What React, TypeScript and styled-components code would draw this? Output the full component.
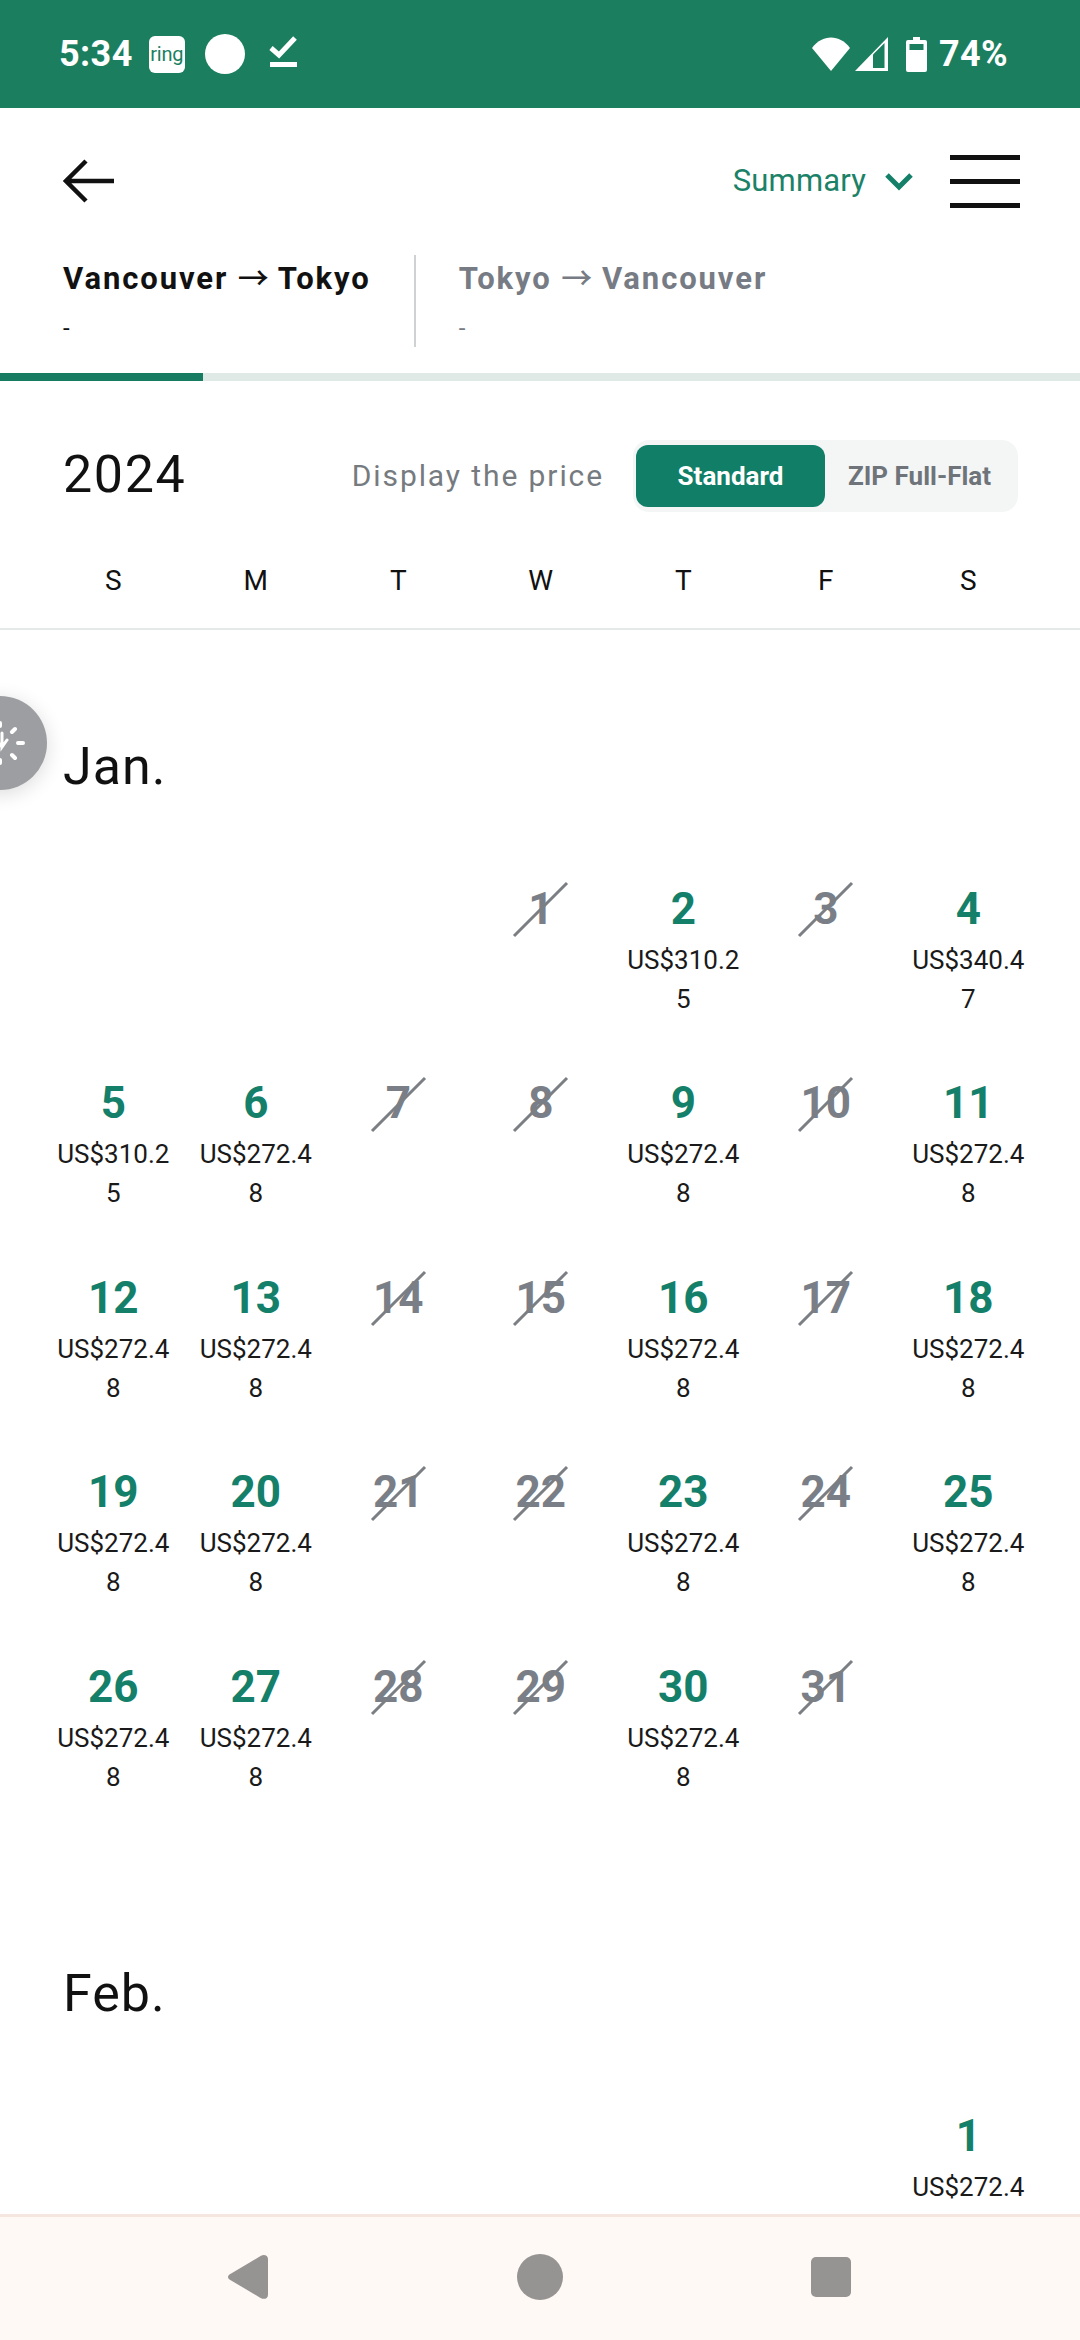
import styled, { createGlobalStyle } from "styled-components";

const GlobalStyle = createGlobalStyle`
    html, body {
        margin: 0;
        padding: 0;
        background: #fff;
    }
    * {
        box-sizing: border-box;
    }
`;

const Page = styled.div`
    width: 1080px;
    height: 2340px;
    display: flex;
    flex-direction: column;
    overflow: hidden;
    background: #fff;
    color: #111;
    font-family: Roboto, "Liberation Sans", sans-serif;
`;

const StatusBar = styled.div`
    flex: none;
    height: 108px;
    padding: 0 72px 0 59px;
    display: flex;
    align-items: center;
    justify-content: space-between;
    background: #1b7f5f;
    color: #fff;
`;

const StatusGroup = styled.div`
    display: flex;
    align-items: center;
`;

const StatusText = styled.span`
    font-size: 36px;
    font-weight: 700;
    line-height: 40px;
    letter-spacing: 0.4px;
`;

const RingBadge = styled.span`
    width: 36px;
    height: 37px;
    margin: 0 20px 0 16px;
    border-radius: 6px;
    display: flex;
    align-items: center;
    justify-content: center;
    background: #fff;
    color: #1b7f5f;
    font-size: 20px;
    letter-spacing: -0.3px;
`;

const Dot = styled.span`
    width: 40px;
    height: 40px;
    margin-right: 23px;
    border-radius: 50%;
    background: #fff;
`;

const StatusIcon = styled.svg<{ $gap?: number }>`
    display: block;
    margin-right: ${(p) => p.$gap ?? 0}px;
`;

const Header = styled.div`
    flex: none;
    height: 146px;
    padding: 0 60px 0 63px;
    display: flex;
    align-items: center;
    justify-content: space-between;
`;

const Actions = styled.div`
    display: flex;
    align-items: center;
`;

const SummaryLabel = styled.span`
    font-size: 31px;
    line-height: 36px;
    letter-spacing: 0.15px;
    color: #1b8268;
`;

const Chevron = styled.svg`
    display: block;
    margin: 2px 36px 0 18px;
`;

const Burger = styled.div`
    width: 70px;
    height: 53px;
    display: flex;
    flex-direction: column;
    justify-content: space-between;
`;

const BurgerLine = styled.span`
    height: 5px;
    background: #111;
`;

const Tabs = styled.div`
    flex: none;
    height: 119px;
    padding: 1px 0 0 63px;
    display: flex;
    align-items: flex-start;
`;

const Tab = styled.div<{ $active?: boolean }>`
    color: ${(p) => (p.$active ? "#111" : "#767b84")};
`;

const TabDivider = styled.div`
    width: 2px;
    height: 92px;
    margin: 0 43px;
    background: #cfd2d2;
`;

const TabTitle = styled.div`
    font-size: 31px;
    font-weight: 700;
    line-height: 42px;
    letter-spacing: 1.9px;
    white-space: nowrap;
`;

const TabArrow = styled.span`
    font-family: "Noto Sans CJK JP", sans-serif;
    font-weight: 500;
    letter-spacing: 0;
`;

const TabSub = styled.div`
    margin-top: 18px;
    font-size: 24px;
    line-height: 20px;
`;

const Progress = styled.div`
    flex: none;
    height: 8px;
    background: #dfeae6;
`;

const ProgressFill = styled.div`
    width: 203px;
    height: 100%;
    background: #187c62;
`;

const YearRow = styled.div`
    flex: none;
    height: 174px;
    padding: 16px 62px 0 63px;
    display: flex;
    align-items: center;
    justify-content: space-between;
`;

const YearLabel = styled.div`
    margin-top: -2px;
    font-size: 52px;
    line-height: 60px;
    letter-spacing: 1.6px;
`;

const PriceControl = styled.div`
    display: flex;
    align-items: center;
`;

const PriceLabel = styled.span`
    margin: -2px 29px 0 0;
    font-size: 30px;
    letter-spacing: 1.9px;
    color: #767b80;
`;

const Toggle = styled.div`
    width: 385px;
    height: 72px;
    padding: 5px 0 5px 3px;
    display: flex;
    border-radius: 16px;
    background: #f4f6f6;
`;

const ToggleOption = styled.div<{ $active?: boolean }>`
    width: 189px;
    display: flex;
    align-items: center;
    justify-content: center;
    border-radius: 12px;
    font-size: 26px;
    font-weight: 700;
    background: ${(p) => (p.$active ? "#117f67" : "transparent")};
    color: ${(p) => (p.$active ? "#fff" : "#6e7479")};
`;

const WeekRow = styled.div`
    flex: none;
    height: 50px;
    padding: 0 42px;
    display: grid;
    grid-template-columns: repeat(7, 142.5px);
    align-items: center;
    text-align: center;
    font-size: 28px;
`;

const WeekDivider = styled.div`
    flex: none;
    height: 2px;
    margin-top: 23px;
    background: #e3eae8;
`;

const Scroller = styled.div`
    position: relative;
    flex: 1;
    min-height: 0;
    overflow: hidden;
`;

const FloatingButton = styled.div`
    position: absolute;
    left: -47px;
    top: 66px;
    width: 94px;
    height: 94px;
    border-radius: 50%;
    background: #9c9ea1;
    box-shadow: 0 4px 20px rgba(0, 0, 0, 0.14);
`;

const FloatingIcon = styled.svg`
    display: block;
`;

const Month = styled.section`
    padding: 106.5px 42px 0;
`;

const MonthTitle = styled.h2`
    margin: 0 0 88px 21px;
    font-size: 52px;
    font-weight: 400;
    line-height: 60px;
    letter-spacing: 1px;
`;

const DaysGrid = styled.div`
    display: grid;
    grid-template-columns: repeat(7, 142.5px);
    grid-auto-rows: 194.5px;
`;

const Cell = styled.div<{ $start?: number }>`
    padding: 0 10px;
    text-align: center;
    ${(p) => (p.$start ? `grid-column-start: ${p.$start};` : "")}
`;

const DayNumber = styled.div<{ $closed?: boolean }>`
    position: relative;
    height: 48px;
    margin-bottom: 8px;
    font-size: 44px;
    font-weight: 700;
    line-height: 48px;
    color: ${(p) => (p.$closed ? "#7a7f87" : "#14806a")};

    ${(p) =>
        p.$closed
            ? `&::after {
        content: "";
        position: absolute;
        left: 50%;
        top: 50%;
        width: 75px;
        height: 3px;
        margin: -0.5px 0 0 -37.5px;
        background: #7b7f84;
        transform: rotate(-45deg);
    }`
            : ""}
`;

const Price = styled.div`
    font-size: 26px;
    line-height: 39px;
    word-break: break-all;
    color: #1a1a1a;
`;

const NavBar = styled.div`
    flex: none;
    height: 126px;
    padding-top: 37px;
    display: grid;
    grid-template-columns: repeat(3, 291px);
    justify-content: center;
    align-items: flex-start;
    justify-items: center;
    background: #fff9f5;
    border-top: 3px solid #f5e6df;
`;

const NavIcon = styled.svg`
    display: block;
`;

type Day = { day: number; price?: string };

const regular = "US$272.48";

function buildJanuary(): Day[] {
    const closed = [1, 3, 7, 8, 10, 14, 15, 17, 21, 22, 24, 28, 29, 31];
    const special: Record<number, string> = {
        2: "US$310.25",
        4: "US$340.47",
        5: "US$310.25",
    };
    const days: Day[] = [];
    for (let d = 1; d <= 31; d++) {
        if (closed.includes(d)) {
            days.push({ day: d });
        } else {
            days.push({ day: d, price: special[d] ?? regular });
        }
    }
    return days;
}

type MonthProps = {
    title: string;
    start: number;
    days: Day[];
};

function MonthBlock({ title, start, days }: MonthProps) {
    return (
        <Month>
            <MonthTitle>{title}</MonthTitle>
            <DaysGrid>
                {days.map((d, i) => (
                    <Cell key={d.day} $start={i === 0 ? start : undefined}>
                        <DayNumber $closed={!d.price}>{d.day}</DayNumber>
                        {d.price && <Price>{d.price}</Price>}
                    </Cell>
                ))}
            </DaysGrid>
        </Month>
    );
}

export default function App() {
    return (
        <Page>
            <GlobalStyle />
            <StatusBar>
                <StatusGroup>
                    <StatusText>5:34</StatusText>
                    <RingBadge>ring</RingBadge>
                    <Dot />
                    <StatusIcon width="30" height="40" viewBox="0 0 30 40">
                        <path d="M3 14l8 7L27 4" fill="none" stroke="#fff" strokeWidth="5" />
                        <rect x="2" y="28" width="27" height="5" fill="#fff" />
                    </StatusIcon>
                </StatusGroup>
                <StatusGroup>
                    <StatusIcon $gap={5} width="38" height="34" viewBox="0 0 38 34">
                        <path d="M0 11C10 -3 28 -3 38 11L19 34z" fill="#fff" />
                    </StatusIcon>
                    <StatusIcon $gap={18} width="33" height="34" viewBox="0 0 33 34">
                        <path d="M0 34L33 0v34z" fill="#fff" />
                        <path d="M18 17.5L29.5 6v25H18z" fill="#1b7f5f" />
                    </StatusIcon>
                    <StatusIcon $gap={12} width="21" height="35" viewBox="0 0 21 35">
                        <path d="M7 0h7v3h5a2 2 0 0 1 2 2v28a2 2 0 0 1-2 2H2a2 2 0 0 1-2-2V5a2 2 0 0 1 2-2h5z" fill="#fff" />
                        <rect x="3.5" y="7" width="14" height="6" fill="#1b7f5f" />
                    </StatusIcon>
                    <StatusText>74%</StatusText>
                </StatusGroup>
            </StatusBar>

            <Header>
                <svg width="52" height="44" viewBox="0 0 52 44">
                    <path d="M23 2L3 22l20 20M3 22h48" fill="none" stroke="#111" strokeWidth="4.5" />
                </svg>
                <Actions>
                    <SummaryLabel>Summary</SummaryLabel>
                    <Chevron width="30" height="20" viewBox="0 0 30 20">
                        <path d="M3 3l12 12L27 3" fill="none" stroke="#14806a" strokeWidth="5" />
                    </Chevron>
                    <Burger>
                        <BurgerLine />
                        <BurgerLine />
                        <BurgerLine />
                    </Burger>
                </Actions>
            </Header>

            <Tabs>
                <Tab $active>
                    <TabTitle>
                        Vancouver <TabArrow>→</TabArrow> Tokyo
                    </TabTitle>
                    <TabSub>-</TabSub>
                </Tab>
                <TabDivider />
                <Tab>
                    <TabTitle>
                        Tokyo <TabArrow>→</TabArrow> Vancouver
                    </TabTitle>
                    <TabSub>-</TabSub>
                </Tab>
            </Tabs>
            <Progress>
                <ProgressFill />
            </Progress>

            <YearRow>
                <YearLabel>2024</YearLabel>
                <PriceControl>
                    <PriceLabel>Display the price</PriceLabel>
                    <Toggle>
                        <ToggleOption $active>Standard</ToggleOption>
                        <ToggleOption>ZIP Full-Flat</ToggleOption>
                    </Toggle>
                </PriceControl>
            </YearRow>

            <WeekRow>
                {["S", "M", "T", "W", "T", "F", "S"].map((d, i) => (
                    <span key={i}>{d}</span>
                ))}
            </WeekRow>
            <WeekDivider />

            <Scroller>
                <MonthBlock title="Jan." start={4} days={buildJanuary()} />
                <MonthBlock title="Feb." start={7} days={[{ day: 1, price: regular }]} />
                <FloatingButton>
                    <FloatingIcon width="94" height="94" viewBox="0 0 94 94">
                        <g stroke="#fff" strokeWidth="4" strokeLinecap="round" fill="none">
                            <path d="M59 36l3-3M65 47h5M59 59l3 3M47 27v3M47 64v3" />
                            <path d="M49 37v14l5-7M49 51l-5-6" strokeWidth="3" />
                        </g>
                    </FloatingIcon>
                </FloatingButton>
            </Scroller>

            <NavBar>
                <NavIcon width="42" height="46" viewBox="0 0 42 46">
                    <path d="M1.5 20.5L33 1.8c3-1.6 7-.5 7 3.5v35.4c0 4-4 5-7 3.5L1.5 25.5c-2-1.4-2-3.6 0-5z" fill="#959493" />
                </NavIcon>
                <NavIcon width="46" height="46" viewBox="0 0 46 46">
                    <circle cx="23" cy="23" r="23" fill="#959493" />
                </NavIcon>
                <NavIcon width="40" height="46" viewBox="0 0 40 46">
                    <rect x="0" y="3" width="40" height="40" rx="5" fill="#959493" />
                </NavIcon>
            </NavBar>
        </Page>
    );
}
